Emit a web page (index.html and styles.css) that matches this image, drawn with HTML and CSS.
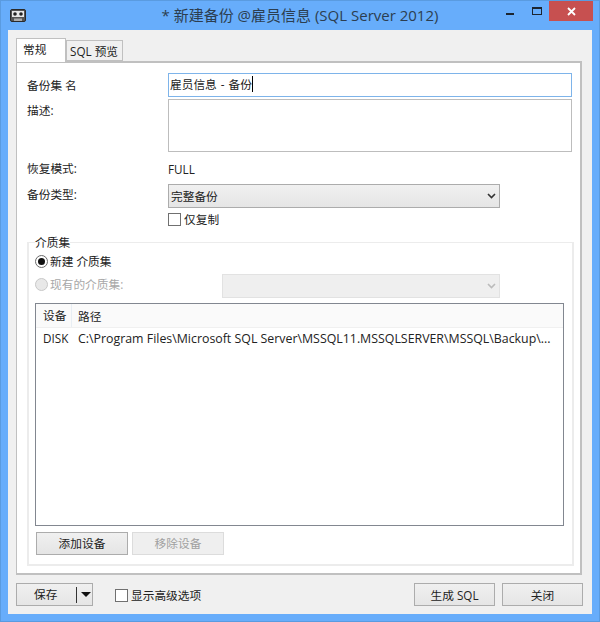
FILE: index.html
```html
<!DOCTYPE html>
<html lang="zh-CN">
<head>
  <meta charset="UTF-8">
  <title>新建备份</title>
  <link rel="stylesheet" href="styles.css">
</head>
<body>
  <div class="window">
    <div class="titlebar">
      <svg class="app-icon" width="16" height="13" viewBox="0 0 16 13">
        <rect x="0.5" y="0.5" width="15" height="12" rx="1.5" fill="#555" stroke="#2a2a2a"/>
        <rect x="2" y="2" width="12" height="6" fill="#e8e8e8"/>
        <circle cx="5" cy="5" r="1.8" fill="#222"/>
        <circle cx="11" cy="5" r="1.8" fill="#222"/>
        <rect x="4" y="9.5" width="8" height="2.5" fill="#aaa"/>
      </svg>
      <div class="title">* 新建备份 @雇员信息 (SQL Server 2012)</div>
      <div class="win-buttons">
        <div class="win-btn"><span class="min-icon"></span></div>
        <div class="win-btn"><span class="max-icon"></span></div>
        <div class="win-close">
          <svg width="9" height="9" viewBox="0 0 9 9"><path d="M1 1l7 7M8 1l-7 7" stroke="#fff" stroke-width="1.8"/></svg>
        </div>
      </div>
    </div>

    <div class="client">
      <div class="tabs">
        <div class="tab active">常规</div>
        <div class="tab">SQL 预览</div>
      </div>

      <div class="panel">
        <div class="row name-row">
          <label class="label">备份集 名</label>
          <div class="input focused">雇员信息 - 备份<span class="caret"></span></div>
        </div>
        <div class="row desc-row">
          <label class="label">描述:</label>
          <div class="textarea"></div>
        </div>
        <div class="row mode-row">
          <label class="label">恢复模式:</label>
          <span>FULL</span>
        </div>
        <div class="row type-row">
          <label class="label">备份类型:</label>
          <div class="select">
            <span>完整备份</span>
            <svg class="chevron" width="9" height="6" viewBox="0 0 9 6"><path d="M1 1l3.5 3.5L8 1" fill="none" stroke="#333" stroke-width="1.6"/></svg>
          </div>
        </div>
        <div class="row copy-row">
          <span class="label"></span>
          <span class="check"></span>
          <span class="copy-text">仅复制</span>
        </div>

        <fieldset class="group">
          <legend>介质集</legend>
          <div class="radio-row new-row">
            <span class="radio checked"></span>
            <span class="new-text">新建 介质集</span>
          </div>
          <div class="radio-row existing-row">
            <span class="radio disabled"></span>
            <span class="existing-label">现有的介质集:</span>
            <div class="select disabled">
              <span></span>
              <svg class="chevron" width="9" height="6" viewBox="0 0 9 6"><path d="M1 1l3.5 3.5L8 1" fill="none" stroke="#bbb" stroke-width="1.6"/></svg>
            </div>
          </div>

          <div class="list">
            <div class="list-head">
              <div class="col-device">设备</div>
              <div class="col-path">路径</div>
            </div>
            <div class="list-row">
              <div class="col-device">DISK</div>
              <div class="col-path">C:\Program Files\Microsoft SQL Server\MSSQL11.MSSQLSERVER\MSSQL\Backup\...</div>
            </div>
          </div>

          <div class="list-buttons">
            <button class="btn device-btn">添加设备</button>
            <button class="btn device-btn" disabled>移除设备</button>
          </div>
        </fieldset>
      </div>

      <div class="footer">
        <button class="btn save-btn">
          <span class="save-text">保存</span>
          <span class="save-arrow"></span>
        </button>
        <span class="check"></span>
        <span class="advanced">显示高级选项</span>
        <button class="btn footer-btn gen-btn">生成 SQL</button>
        <button class="btn footer-btn">关闭</button>
      </div>
    </div>
  </div>
</body>
</html>
```

FILE: styles.css
```css
* {
  margin: 0;
  padding: 0;
  box-sizing: border-box;
}

body {
  width: 600px;
  height: 622px;
  overflow: hidden;
  background: #fff;
  color: #222;
  font-family: "Open Sans", "Noto Sans CJK SC", sans-serif;
  font-size: 11.7px;
}

.window {
  width: 600px;
  height: 622px;
  background: #67adfb;
  box-shadow: inset 0 0 0 1px #5a9be0;
  padding: 0 8px 8px 8px;
  display: flex;
  flex-direction: column;
}

.titlebar {
  height: 30px;
  flex: none;
  display: flex;
  align-items: flex-start;
  position: relative;
}

.app-icon {
  margin: 9px 0 0 2px;
}

.title {
  position: absolute;
  left: 0;
  right: 0;
  top: 5px;
  text-align: center;
  font-size: 15px;
  line-height: 20px;
  color: #2c3e50;
}

.win-buttons {
  margin-left: auto;
  display: flex;
  position: relative;
  padding-top: 1px;
}

.win-btn {
  width: 26px;
  height: 19px;
  display: flex;
  align-items: center;
  justify-content: center;
}

.min-icon {
  width: 8px;
  height: 2px;
  background: #1c2530;
  margin-top: 7px;
}

.max-icon {
  width: 10px;
  height: 8px;
  margin: 0 0 0 2px;
  border: 1px solid #1c2530;
  border-top-width: 2px;
}

.win-close {
  width: 44px;
  height: 20px;
  margin-right: -1px;
  background: #c75050;
  display: flex;
  align-items: center;
  justify-content: center;
}

.client {
  flex: 1;
  background: #f0f0f0;
  padding: 8px 8px 0 8px;
  display: flex;
  flex-direction: column;
}

.tabs {
  display: flex;
  height: 24px;
  flex: none;
  position: relative;
  z-index: 1;
  margin-bottom: -1px;
}

.tab {
  width: 57px;
  border: 1px solid #c0c0c0;
  background: #f0f0f0;
  height: 21px;
  margin-top: 2px;
  padding: 0 3px;
  line-height: 20px;
  white-space: nowrap;
}

.tab.active {
  width: 50px;
  height: 24px;
  margin-top: 0;
  padding: 0 6px;
  line-height: 20px;
  background: #fff;
  border-bottom: none;
}

.panel {
  height: 514px;
  width: 566px;
  flex: none;
  background: #fff;
  border: 1px solid #c0c0c0;
  border-width: 2px 2px 2px 1px;
  padding: 10px 8px 0 10px;
}

.row {
  display: flex;
  align-items: center;
}

.label {
  width: 141px;
  flex: none;
}

.name-row {
  height: 24px;
}

.name-row .label {
  margin-bottom: 2px;
}

.input {
  width: 405px;
  height: 24px;
  border: 1px solid #7eb4ea;
  padding-left: 1px;
  line-height: 21px;
  word-spacing: 1px;
}

.caret {
  display: inline-block;
  width: 1px;
  height: 16px;
  background: #000;
  vertical-align: -3px;
}

.desc-row {
  height: 53px;
  margin-top: 2px;
  align-items: flex-start;
}

.desc-row .label {
  margin-top: 2px;
}

.textarea {
  width: 405px;
  height: 53px;
  border: 1px solid #bdbdbd;
}

.mode-row {
  height: 18px;
  margin-top: 8px;
}

.mode-row .label {
  margin-bottom: 4px;
}

.type-row {
  height: 24px;
  margin-top: 6px;
}

.type-row .label {
  margin: -2px 0 4px;
}

.select {
  width: 332px;
  height: 24px;
  border: 1px solid #acacac;
  background: linear-gradient(#f0f0f0, #e5e5e5);
  display: flex;
  align-items: center;
  justify-content: space-between;
  padding: 0 3px 1px 2px;
}

.select.disabled {
  width: 278px;
  background: #efefef;
  border-color: #e2e2e2;
}

.chevron {
  flex: none;
  margin-top: 1px;
}

.copy-row {
  height: 15px;
  margin-top: 4px;
}

.copy-text {
  margin-bottom: 2px;
}

.check {
  width: 13px;
  height: 13px;
  flex: none;
  display: inline-block;
  background: #fff;
  border: 1px solid #707070;
  margin-right: 3px;
}

.group {
  margin-top: 8px;
  width: 546px;
  height: 331px;
  border: 2px solid #ececec;
  border-top-width: 1px;
  padding: 0 8px 0 6px;
}

.group legend {
  line-height: 14px;
}

.radio-row {
  display: flex;
  align-items: center;
}

.new-row {
  height: 18px;
  margin-top: 3px;
}

.new-text {
  margin-bottom: 2px;
}

.existing-row {
  height: 24px;
  margin-top: 4px;
}

.radio {
  width: 13px;
  height: 13px;
  flex: none;
  border-radius: 50%;
  border: 1px solid #6a6a6a;
  background: #fff;
  margin-right: 2px;
  position: relative;
}

.radio.checked::after {
  content: "";
  position: absolute;
  left: 2px;
  top: 2px;
  width: 7px;
  height: 7px;
  border-radius: 50%;
  background: #111;
}

.radio.disabled {
  border-color: #c8c8c8;
  background: #e8e8e8;
  margin-bottom: 4px;
}

.existing-label {
  color: #a8a8a8;
  width: 172px;
  flex: none;
  margin-bottom: 6px;
}

.list {
  width: 529px;
  height: 223px;
  margin-top: 5px;
  border: 1px solid #828790;
  background: #fff;
}

.list-head {
  display: flex;
  height: 24px;
  background: #fafafa;
  border-bottom: 1px solid #f0f0f0;
  align-items: center;
}

.list-head .col-device {
  border-right: 1px solid #e8eef4;
  height: 23px;
  line-height: 22px;
}

.list-row {
  display: flex;
  height: 20px;
  align-items: center;
}

.col-device {
  width: 36px;
  padding-left: 7px;
  flex: none;
}

.col-path {
  padding-left: 6px;
  white-space: nowrap;
}

.list-row .col-path {
  font-size: 12.36px;
}

.list-buttons {
  display: flex;
  gap: 4px;
  margin: 6px 0 0 1px;
}

.btn {
  font: inherit;
  color: #222;
  height: 23px;
  border: 1px solid #acacac;
  background: linear-gradient(#f0f0f0, #e5e5e5);
}

.device-btn {
  width: 92px;
  padding-bottom: 3px;
}

.btn:disabled {
  color: #a0a0a0;
  background: #efefef;
  border-color: #dcdcdc;
}

.footer {
  display: flex;
  align-items: center;
  margin-top: 8px;
  margin-right: 1px;
  height: 23px;
}

.footer .check {
  margin-top: 2px;
}

.save-btn {
  width: 77px;
  display: flex;
  align-items: center;
  padding-left: 17px;
  margin-right: 22px;
  flex: none;
}

.save-text {
  width: 43px;
  text-align: left;
  margin-bottom: 2px;
}

.save-arrow {
  width: 16px;
  height: 16px;
  flex: none;
  border-left: 1px solid #333;
  position: relative;
}

.save-arrow::after {
  content: "";
  position: absolute;
  left: 4px;
  top: 5px;
  border-style: solid;
  border-width: 5px 5px 0 5px;
  border-color: #111 transparent transparent transparent;
}

.advanced {
  white-space: nowrap;
}

.footer-btn {
  width: 81px;
  flex: none;
  margin-left: 7px;
}

.gen-btn {
  margin-left: auto;
}
```
